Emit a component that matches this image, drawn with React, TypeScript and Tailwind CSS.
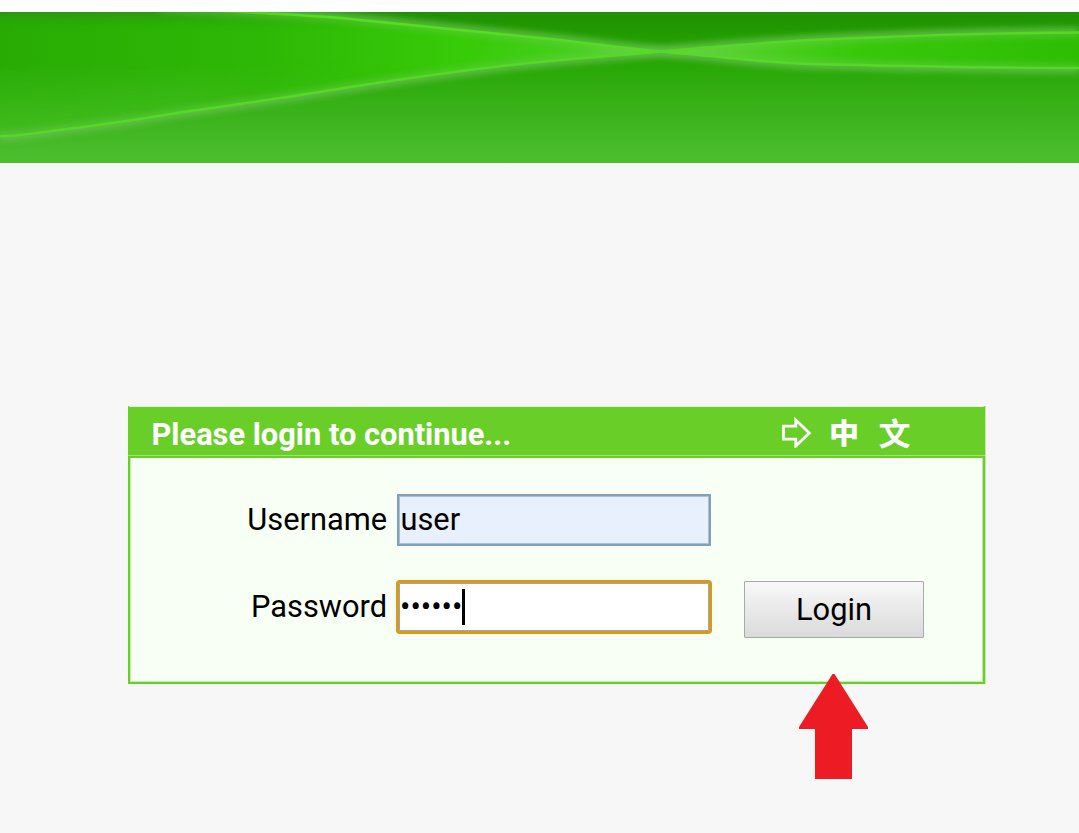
function Banner() {
  const upper = 'M160 -4 C220 0 300 1 360 8 L420 14 L500 22 L560 28 L610 34 C650 39 690 42 720 45 C750 48 770 50.5 810 52 C900 54 980 56 1079 56';
  const lower = 'M0 124.2 C28 124 45 119 80 115.5 L130 108.5 L180 100.5 L240 92 L300 83 L360 73.5 C410 66 480 56 530 51 C590 45 650 41 700 36 C760 31 820 27 860 26 C930 23 990 21 1079 20.5';
  return (
    <svg className="block h-[151px] w-full" viewBox="0 0 1079 151" preserveAspectRatio="none">
      <defs>
        <linearGradient id="base" x1="0" y1="0" x2="0" y2="1">
          <stop offset="0" stopColor="#218f06" />
          <stop offset="0.12" stopColor="#219a00" />
          <stop offset="0.38" stopColor="#29a908" />
          <stop offset="0.7" stopColor="#3cb41c" />
          <stop offset="1" stopColor="#4dbf30" />
        </linearGradient>
        <linearGradient id="leftX" x1="0" y1="0" x2="660" y2="0" gradientUnits="userSpaceOnUse">
          <stop offset="0" stopColor="#28ac04" />
          <stop offset="0.4" stopColor="#2eb806" />
          <stop offset="0.7" stopColor="#37cb08" />
          <stop offset="0.87" stopColor="#46d01c" />
          <stop offset="1" stopColor="#60da3c" />
        </linearGradient>
        <linearGradient id="leftY" x1="0" y1="0" x2="0" y2="124" gradientUnits="userSpaceOnUse">
          <stop offset="0" stopColor="#2d8e15" stopOpacity="0.7" />
          <stop offset="0.16" stopColor="#27ae00" stopOpacity="0" />
          <stop offset="0.4" stopColor="#4cc12a" stopOpacity="0" />
          <stop offset="1" stopColor="#4cc12a" stopOpacity="0.75" />
        </linearGradient>
        <linearGradient id="fadeY" x1="0" y1="0" x2="520" y2="0" gradientUnits="userSpaceOnUse">
          <stop offset="0.35" stopColor="#fff" />
          <stop offset="0.8" stopColor="#000" />
        </linearGradient>
        <mask id="leftMask"><rect width="1079" height="151" fill="url(#fadeY)" /></mask>
        <linearGradient id="rightX" x1="660" y1="0" x2="1079" y2="0" gradientUnits="userSpaceOnUse">
          <stop offset="0" stopColor="#63d83c" />
          <stop offset="0.25" stopColor="#4bd020" />
          <stop offset="0.48" stopColor="#37c80a" />
          <stop offset="1" stopColor="#2fbd04" />
        </linearGradient>
        <linearGradient id="upperLine" x1="160" y1="0" x2="1079" y2="0" gradientUnits="userSpaceOnUse">
          <stop offset="0" stopColor="#54df20" stopOpacity="0" />
          <stop offset="0.15" stopColor="#54df20" />
          <stop offset="1" stopColor="#55d82b" />
        </linearGradient>
        <filter id="glow" x="-5%" y="-40%" width="110%" height="180%"><feGaussianBlur stdDeviation="3" /></filter>
        <filter id="soft" x="-5%" y="-40%" width="110%" height="180%"><feGaussianBlur stdDeviation="0.7" /></filter>
      </defs>
      <rect width="1079" height="151" fill="url(#base)" />
      <g fill="none" strokeWidth="11" stroke="#62b84c" filter="url(#glow)">
        <path d={upper} opacity="0.55" />
        <path d={lower} opacity="0.55" />
      </g>
      <path d="M0 0 H250 C290 1 325 4 360 8 L420 14 L500 22 L560 28 L610 34 L665 40 C620 42 570 47 530 51 C480 56 410 66 360 73.5 L300 83 L240 92 L180 100.5 L130 108.5 L80 115.5 C45 119 28 124 0 124.2Z" fill="url(#leftX)" />
      <path d="M0 0 H250 C290 1 325 4 360 8 L520 25 V52 L360 73.5 L300 83 L240 92 L180 100.5 L130 108.5 L80 115.5 C45 119 28 124 0 124.2Z" fill="url(#leftY)" mask="url(#leftMask)" />
      <path d="M665 40 L700 36 C760 31 820 27 860 26 C930 23 990 21 1079 20.5 V56 C980 56 900 54 810 52 C770 50.5 750 48 720 45Z" fill="url(#rightX)" />
      <g fill="none" strokeWidth="8" stroke="#6acb4e" opacity="0.5" filter="url(#glow)">
        <path d={upper} />
        <path d={lower} />
      </g>
      <g fill="none" strokeWidth="2.4" filter="url(#soft)">
        <path d={upper} stroke="url(#upperLine)" />
        <path d={lower} stroke="#55d927" />
      </g>
    </svg>
  );
}

export default function App() {
  return (
    <div className="h-[833px] w-full overflow-hidden bg-[#f7f7f7] font-[Roboto,sans-serif] text-[30.8px] text-black">
      <div className="h-3 bg-white" />
      <Banner />
      <main className="relative ml-32 mt-[243px] h-[278px] w-[857px] border-2 border-t-[1px] border-[#69cf28] border-t-[#e6f4dd] bg-[#f8fff4] shadow-[inset_0_0_0_1px_#c4ecaa,1px_0_0_0_#c4ecaa]">
        <header className="-mx-[2px] flex h-[49px] items-start border-b border-[#a0e078] bg-[#69cf28] pl-[23.5px] text-white">
          <h1 className="mt-[7px] w-[629.5px] whitespace-nowrap leading-[41px] font-bold">
            Please login to continue...
          </h1>
          <svg className="mt-[9px] h-8 w-8 shrink-0" viewBox="0 0 32 32" fill="none" stroke="currentColor" strokeWidth="2.8">
            <path d="M2.5 10.2 H14.8 V4 L28.3 17 L14.8 30 V23.2 H2.5Z" />
          </svg>
          <span className="ml-[16px] mt-[10px] w-[30px] origin-center -translate-y-[1px] scale-y-95 font-['Noto_Sans_CJK_SC',sans-serif] text-[30px] leading-[32px] font-black">中</span>
          <span className="ml-[19.5px] mt-[10px] w-[32px] origin-center -translate-y-[1px] scale-y-95 font-['Noto_Sans_CJK_SC',sans-serif] text-[32px] leading-[32px] font-bold">文</span>
        </header>
        <div className="-mx-px h-[2px] bg-[#69cf28]" />
        <form className="flex flex-col gap-[34px] pt-9" onSubmit={(e) => e.preventDefault()}>
          <div className="flex h-[52px] items-center">
            <label className="w-[257px] text-right" htmlFor="username">Username</label>
            <input id="username" defaultValue="user" className="ml-[10px] h-[52px] w-[314px] border-2 border-[#809fb9] bg-[#e8effd] pb-[2px] pl-[1.5px] shadow-[inset_0_0_0_1px_#a9c0d8] outline-none" />
          </div>
          <div className="flex h-[54px] items-center">
            <label className="w-[257px] text-right">Password</label>
            <div className="ml-[9px] flex h-[54px] w-[316px] items-center rounded-[4px] border-[3px] border-[#e1980e] bg-white shadow-[inset_0_0_0_1px_#8fa9c4]">
              <span className="ml-px w-[62px] whitespace-nowrap">••••••</span>
              <span className="h-9 w-[2.5px] bg-black" />
            </div>
            <button className="ml-8 mt-[5px] h-[57px] w-[180px] shrink-0 rounded-[1px] border border-[#a9a9a9] bg-linear-to-b from-[#f8f8f8] to-[#dadada] pt-[2px]">Login</button>
          </div>
        </form>
        <svg className="absolute top-[267px] left-[668px] h-[107px] w-[70px]" viewBox="0 0 70 107" fill="#ed1c24">
          <path d="M34.5 0 H36.5 L70 53 V55 H54 V105 H17 V55 H1 V53Z" />
        </svg>
      </main>
    </div>
  );
}
